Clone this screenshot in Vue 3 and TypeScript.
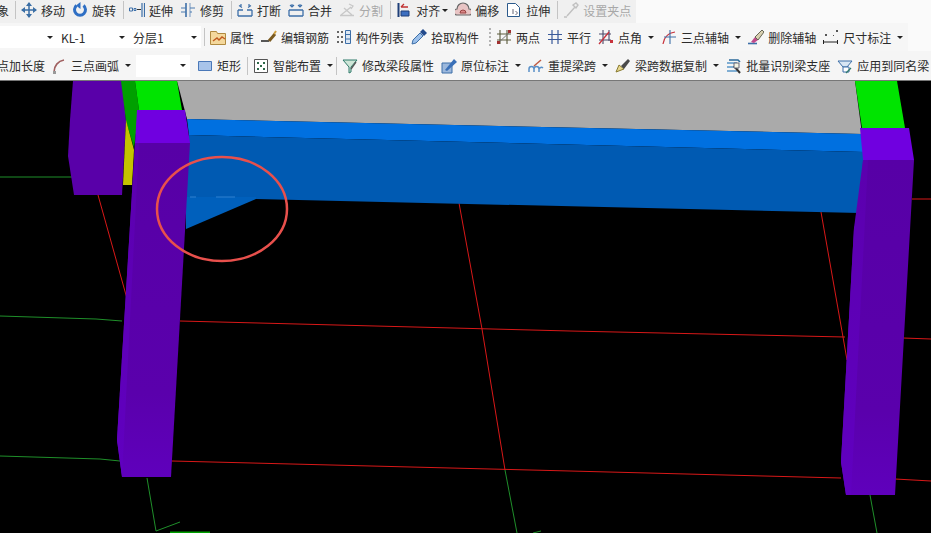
<script setup lang="ts">
// 工具栏数据 + 三维视图
interface Shape { d: string; s?: string; f?: string; w?: number }
interface Tool { icon?: string; label: string; caret?: boolean; off?: boolean; cut?: boolean; pad?: number; caretGap?: number }
interface Combo { combo: string; wide: number; after?: number }
type Cell = Tool | Combo | { sep: true } | { grip: true }

const B = '#3a6ea5'
const R = '#c8323c'

const icons: Record<string, Shape[]> = {
  move: [{ d: 'M8 1v14M1 8h14', s: B, w: 1.5 }, { d: 'M8 0 5 4h6zM8 16l-3-4h6zM0 8l4-3v6zM16 8l-4-3v6z', f: B }],
  rotate: [{ d: 'M4.500 3.500a5.500 5.500 0 1 0 7 0', s: '#2f6fc4', w: 3 }, { d: 'M8.500 0v7L4 3.500z', f: '#2f6fc4' }],
  extend: [{ d: 'M13 1v14M15.500 1v14', s: '#3d6fa8', w: 1.2 }, { d: 'M.500 6h3v3h-3zM5 6.500h2v2H5z', s: '#3d6fa8', w: 1 }, { d: 'M8 7.500h4', s: '#333', w: 1 }],
  trim: [{ d: 'M6 1v14', s: '#3d6fa8', w: 1.6 }, { d: 'M10 1v14', s: '#8aa6c8', w: 1.2 }, { d: 'M1 6h5M1 10h5M10 6h5M10 10h2', s: '#4a7ab0', w: 1 }],
  split: [{ d: 'M1 8h5M10 8h5M1 14h14M1 8v6M15 8v6', s: '#3d6fa8', w: 1.3 }, { d: 'M4 2v3M12 2v3M2 3.500l3 2M14 3.500l-3 2', s: '#3d6fa8', w: 1.2 }],
  merge: [{ d: 'M1 8h14M1 14h14M1 8v6M15 8v6', s: '#3d6fa8', w: 1.3 }, { d: 'M4 2v3M12 2v3M2 3l2 2 2-2M10 3l2 2 2-2', s: '#3d6fa8', w: 1.1 }],
  cutoff: [{ d: 'M1 13.500h14M2 13l10-8M5 6l8 7M10 2l4 2-2 3', s: '#c8c8c8', w: 1.3 }],
  align: [{ d: 'M2.500 1v14', s: '#1e3f78', w: 2 }, { d: 'M5 9h8v5H5z', f: '#3d6fc0', s: '#1e3f78', w: 1 }, { d: 'M5 5h7M5 5l3-3', s: '#c03030', w: 1.3 }],
  offset: [{ d: 'M2 13a3 3 0 0 1 0-6 6 6 0 0 1 12 0 3 3 0 0 1 0 6z', f: '#e8c4c4', s: '#666', w: 1.2 }, { d: 'M5 11a3 3 0 0 1 6 0z', f: '#d88', s: '#944', w: 1 }],
  stretch: [{ d: 'M1.500 1.500h8l4 4v9h-12z', f: '#fff', s: '#2b5a8c', w: 1 }, { d: 'M7 7v5M9.500 9l2 2-2 2', s: '#667', w: 1 }],
  grip: [{ d: 'M1 15h3M4 14l8-9M10 3l3-2 2 2-2 3z', s: '#c0c0c0', w: 1.4 }],
  props: [{ d: 'M.500 2.500h6l1 2h8v11H.500z', f: '#f4d89c', s: '#b08a40', w: 1 }, { d: 'M3 12l4-3 2 2 3-3 3 2', s: '#c05a20', w: 1.4 }],
  rebar: [{ d: 'M0 12h8', s: '#222', w: 1.5 }, { d: 'M8 12l6-7', s: '#7a5a20', w: 3 }, { d: 'M13 5l2-3', s: '#d0a040', w: 2 }],
  list: [{ d: 'M1 2h2v2H1zM1 7h2v2H1zM1 12h2v2H1zM5 2h2v2H5zM5 7h2v2H5zM5 12h2v2H5z', f: '#666' }, { d: 'M9.500 1.500h5v13h-5zM9.500 5.500h5M9.500 10h5', s: '#3d6fa8', w: 1, f: '#dde8f4' }],
  pick: [{ d: 'M1 15l1-4 7-7 3 3-7 7z', f: '#9cc0ea', s: '#3d6fa8', w: 1 }, { d: 'M9 3l4 4 3-3-4-4z', f: '#234a8c' }],
  two: [{ d: 'M4 1v14M11 1v14M1 5h14M1 11h14', s: '#5a5a3a', w: 1.1 }, { d: 'M1 15 15 2', s: '#777', w: 1 }, { d: 'M1 12h3v3H1zM12 1h3v3h-3z', f: '#a03030' }],
  parallel: [{ d: 'M5 1v14M11 1v14M1 5.500h14M1 10.500h14', s: '#3a5a9a', w: 1.2 }],
  angle: [{ d: 'M5 1v14M11 1v11M1 5h12M1 11h12', s: '#4a4a6a', w: 1.1 }, { d: 'M1 15 11 3', s: R, w: 1.3 }, { d: 'M12 11h3v3h-3z', f: R }],
  three: [{ d: 'M2 15C3 8 7 4 14 3', s: R, w: 1.2 }, { d: 'M9 1v14M3 8h12', s: '#3d6fa8', w: 1.1 }],
  del: [{ d: 'M0 14.500h9', s: '#3d6fa8', w: 1.6 }, { d: 'M3 13l4-5 3 3-4 3z', f: '#c04a8a' }, { d: 'M7 8l7-7 2 2-6 8z', f: '#d8d0b0', s: '#665', w: 1 }],
  dim: [{ d: 'M.500 11v4M14.500 11v4M1 13h13', s: '#222', w: 1 }, { d: 'M2 5h2v2H2zM13 1h2v2h-2zM10 6h1v1h-1z', f: '#555' }],
  arc: [{ d: 'M3 14C3 8 7 3 13 2', s: '#a06060', w: 1.6 }, { d: 'M2 13h3v3H2z', f: '#999' }],
  rect: [{ d: 'M1.500 3.500h13v9h-13z', f: '#a8c4ea', s: '#4a78b8', w: 1 }],
  smart: [{ d: 'M1.500 1.500h13v13h-13z', f: '#fff', s: '#555', w: 1 }, { d: 'M4 4h2v2H4zM10 4h2v2h-2zM7 7h2v2H7zM4 10h2v2H4zM10 10h2v2h-2z', f: '#2d6a4a' }],
  seg: [{ d: 'M1 2h14L9 9v5L7 15V9z', f: '#cfe6d8', s: '#2f7a6a', w: 1 }, { d: 'M9 11l5-7', s: '#555', w: 1.3 }],
  mark: [{ d: 'M1 5h10v10H1z', f: '#9cb8dc', s: '#3d6fa8', w: 1 }, { d: 'M4 12l9-11 3 3-10 9z', f: '#3a70b8' }],
  lift: [{ d: 'M1 14v-3a2.500 2.500 0 0 1 5 0v3M6 14v-3a2.500 2.500 0 0 1 5 0v3M11 14v-3a2.500 2.500 0 0 1 4-1', s: '#5a90c8', w: 1.5 }, { d: 'M6 8l7-6', s: '#c05a40', w: 1.5 }],
  brush: [{ d: 'M1 14l3-7 5 4z', f: '#e8d890', s: '#887a30', w: 1 }, { d: 'M6 8l7-7 2 2-6 8z', f: '#4a4a4a' }],
  batch: [{ d: 'M1 5h10M1 9h10M1 13h10', s: '#5a96c8', w: 1.5 }, { d: 'M3 2h9l2 2', s: '#2b6a9a', w: 1.6 }, { d: 'M8 8l6 7', s: '#333', w: 2 }, { d: 'M8 5h5v5H8z', f: '#f4f4e4', s: '#667', w: 1 }],
  apply: [{ d: 'M1 3h14l-5 6H6z', f: '#d8e6f4', s: '#3d6fa8', w: 1 }, { d: 'M6 9h6v5H6z', f: '#fff', s: '#3d6fa8', w: 1 }, { d: 'M9 15l5-5', s: '#2f7a6a', w: 1.3 }],
}

const row1: Cell[] = [
  { label: '象', cut: true, pad: 6 }, { sep: true },
  { icon: 'move', label: '移动' }, { icon: 'rotate', label: '旋转' }, { sep: true },
  { icon: 'extend', label: '延伸' }, { icon: 'trim', label: '修剪' }, { sep: true },
  { icon: 'split', label: '打断' }, { icon: 'merge', label: '合并' }, { icon: 'cutoff', label: '分割', off: true }, { sep: true },
  { icon: 'align', label: '对齐', caret: true, caretGap: 2 }, { icon: 'offset', label: '偏移' }, { icon: 'stretch', label: '拉伸' }, { sep: true },
  { icon: 'grip', label: '设置夹点', off: true },
]
const row2: Cell[] = [
  { combo: '', wide: 57 }, { combo: 'KL-1', wide: 72 }, { combo: '分层1', wide: 72, after: 3 }, { sep: true },
  { icon: 'props', label: '属性' }, { icon: 'rebar', label: '编辑钢筋' }, { icon: 'list', label: '构件列表' }, { icon: 'pick', label: '拾取构件' },
  { grip: true },
  { icon: 'two', label: '两点' }, { icon: 'parallel', label: '平行' }, { icon: 'angle', label: '点角', caret: true },
  { icon: 'three', label: '三点辅轴', caret: true }, { icon: 'del', label: '删除辅轴' }, { icon: 'dim', label: '尺寸标注', caret: true },
]
const row3: Cell[] = [
  { label: '点加长度', cut: true, pad: 6 },
  { icon: 'arc', label: '三点画弧', caret: true, pad: 5 }, { combo: '', wide: 54, after: 7 },
  { icon: 'rect', label: '矩形', pad: 6 }, { sep: true },
  { icon: 'smart', label: '智能布置', caret: true, pad: 3 }, { sep: true },
  { icon: 'seg', label: '修改梁段属性' }, { icon: 'mark', label: '原位标注', caret: true }, { icon: 'lift', label: '重提梁跨', caret: true },
  { icon: 'brush', label: '梁跨数据复制', caret: true }, { icon: 'batch', label: '批量识别梁支座' }, { icon: 'apply', label: '应用到同名梁' },
]
const rows = [
  { key: 'one', cells: row1 },
  { key: 'two', cells: row2 },
  { key: 'three', cells: row3 },
]

const asTool = (c: Cell) => c as Tool
const asCombo = (c: Cell) => c as Combo
const isTool = (c: Cell) => 'label' in c
const isSep = (c: Cell) => 'sep' in c
const isGrip = (c: Cell) => 'grip' in c
const isCombo = (c: Cell) => 'combo' in c

// 三维视图里的面，坐标直接取屏幕坐标
const faces = [
  { c: '#aaaaaa', p: '177,81 855,81 862,134 187,119' },
  { c: '#5900a9', p: '73,81 122,81 126,121 122,195 74,195 68,156 70,120' },
  { c: '#00a000', p: '121,81 135,81 139,110 134,148 126,121' },
  { c: '#c4c400', p: '126,120 134,150 132,185 123,185' },
  { c: '#00e400', p: '135,81 177,81 182,110 139,110' },
  { c: '#00e400', p: '855,81 897,81 905,128 862,128' },
  { c: '#0070e0', p: '187,119 862,134 864,152 189,135' },
  { c: '#005ab2', p: '189,135 864,152 860,213 256,199 256,197 186,197' },
  { c: '#0060bc', p: '186,197 256,197 256,199 186,229' },
  { c: '#7000e0', p: '137,110 185,110 190,143 135,143' },
  { c: 'url(#column)', p: '135,143 190,143 171,477 122,477 117,440' },
  { c: 'url(#columnSide)', p: '135,143 139,143 122,477 117,440' },
  { c: '#7000e0', p: '860,128 909,128 914,160 863,160' },
  { c: 'url(#column)', p: '863,160 914,160 895,495 846,495 841,462 854,228 860,213' },
  { c: 'url(#columnSide)', p: '863,160 868,160 851,495 846,495 841,462 854,228' },
]
const redLines = [
  '98,195 133,320',
  '180,321 570,331 845,337',
  '903,338 931,339',
  '172,461 570,471 841,478',
  '895,479 931,481',
  '459,203 482,329 505,470',
  '821,212 843,337 847,360',
  '912,199 931,199',
]
const greenLines = [
  '0,177 72,177',
  '0,316 96,319 122,321',
  '0,456 100,459 120,461',
  '147,478 156,531',
  '156,531 180,522',
  '505,470 517,533',
  '533,533 541,531',
  '870,495 877,533',
]
const glints = ['190,197 196,197', '216,197 235,197']
</script>

<template>
  <div class="screen">
    <header class="toolbar">
      <div v-for="row in rows" :key="row.key" class="row" :class="row.key">
        <template v-for="(cell, i) in row.cells" :key="i">
          <span v-if="isSep(cell)" class="sep"></span>
          <span v-else-if="isGrip(cell)" class="gripper"></span>
          <span
            v-else-if="isCombo(cell)"
            class="combo"
            :style="{ width: asCombo(cell).wide + 'px', marginRight: (asCombo(cell).after ?? 0) + 'px' }"
          >
            <span>{{ asCombo(cell).combo }}</span>
            <i class="caret"></i>
          </span>
          <span
            v-else-if="isTool(cell)"
            class="tool"
            :class="{ off: asTool(cell).off, cut: asTool(cell).cut }"
            :style="{ paddingRight: (asTool(cell).pad ?? 7) + 'px' }"
          >
            <svg v-if="asTool(cell).icon" class="icon" viewBox="0 0 16 16">
              <path
                v-for="(sh, k) in icons[asTool(cell).icon!]"
                :key="k"
                :d="sh.d"
                :fill="sh.f ?? 'none'"
                :stroke="sh.s ?? 'none'"
                :stroke-width="sh.w ?? 1"
              />
            </svg>
            <span class="label">{{ asTool(cell).label }}</span>
            <i
              v-if="asTool(cell).caret"
              class="caret"
              :style="{ marginLeft: (asTool(cell).caretGap ?? 6) + 'px' }"
            ></i>
          </span>
        </template>
      </div>
    </header>

    <svg class="view" viewBox="0 81 931 452">
      <defs>
        <linearGradient id="column" x1="0" y1="0" x2="0" y2="1">
          <stop offset="0" stop-color="#5700a6" />
          <stop offset="0.75" stop-color="#5a00ac" />
          <stop offset="1" stop-color="#5f00bc" />
        </linearGradient>
        <linearGradient id="columnSide" x1="0" y1="0" x2="0" y2="1">
          <stop offset="0" stop-color="#5b00ae" />
          <stop offset="1" stop-color="#6000c0" />
        </linearGradient>
      </defs>
      <polyline v-for="l in redLines" :key="l" :points="l" fill="none" stroke="#d81818" stroke-width="1" />
      <polyline v-for="l in greenLines" :key="l" :points="l" fill="none" stroke="#1f8f2a" stroke-width="1" />
      <path d="M170 532.500h40" stroke="#00a000" stroke-width="2" />
      <polygon v-for="f in faces" :key="f.p" :points="f.p" :fill="f.c" />
      <polyline v-for="l in glints" :key="l" :points="l" fill="none" stroke="#2f80d0" stroke-width="1" />
      <ellipse cx="222" cy="209" rx="65" ry="52" fill="none" stroke="#e8504c" stroke-width="2.500" />
    </svg>
  </div>
</template>

<style>
body {
  background: #000;
}
</style>

<style scoped>
.screen {
  width: 931px;
  height: 533px;
  display: flex;
  flex-direction: column;
  overflow: hidden;
  background: #000;
  font-family: "Noto Sans CJK SC", "Liberation Sans", sans-serif;
  font-size: 12px;
  color: #2c2c2c;
}
.toolbar {
  height: 81px;
  flex: none;
  background: #fafafa;
}
.row {
  display: flex;
  align-items: center;
  white-space: nowrap;
}
.row.one {
  height: 20px;
  padding-bottom: 3px;
  width: 636px;
  background: #f0f0f0;
}
.row.two {
  height: 28px;
  width: 908px;
  background: #f6f6f6;
}
.row.three {
  height: 30px;
  background: #f5f5f5;
  border-bottom: 1px solid #777;
  box-sizing: border-box;
}
.tool {
  display: flex;
  align-items: center;
  flex: none;
}
.tool.off {
  color: #a8a8a8;
}
.tool.cut .label {
  margin-left: -3px;
}
.icon {
  width: 16px;
  height: 16px;
  margin-right: 4px;
  flex: none;
}
.caret {
  display: inline-block;
  width: 0;
  height: 0;
  border-left: 3px solid transparent;
  border-right: 3px solid transparent;
  border-top: 3px solid #222;
}
.sep {
  width: 1px;
  height: 18px;
  margin-right: 5px;
  flex: none;
  background: #c4c4c4;
}
.gripper {
  width: 2px;
  height: 18px;
  margin: 0 5px 0 3px;
  flex: none;
  background: repeating-linear-gradient(#b4b4b4 0 2px, transparent 2px 4px);
}
.combo {
  display: flex;
  align-items: center;
  justify-content: space-between;
  box-sizing: border-box;
  height: 22px;
  padding: 0 4px;
  flex: none;
  background: #fff;
}
.view {
  display: block;
  width: 931px;
  height: 452px;
  flex: none;
  background: #000;
}
</style>
